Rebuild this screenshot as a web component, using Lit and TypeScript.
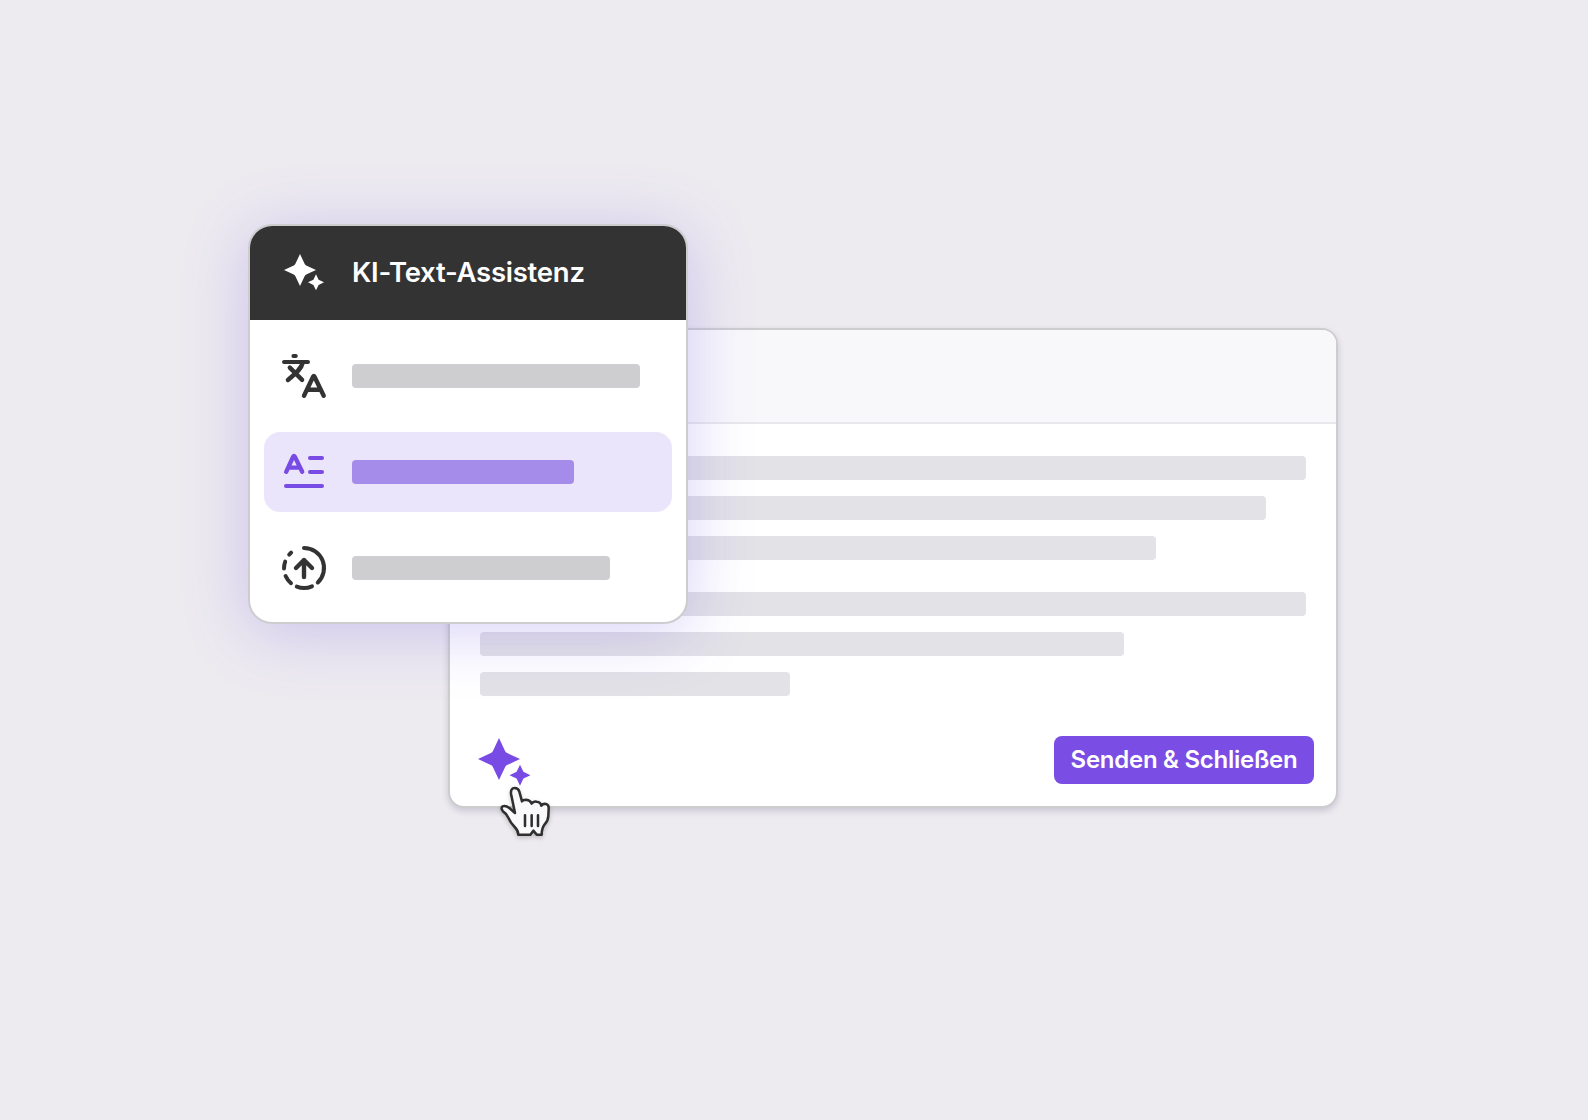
import { LitElement, html, css, svg } from 'lit';
import { customElement, property } from 'lit/decorators.js';
import { classMap } from 'lit/directives/class-map.js';
import { styleMap } from 'lit/directives/style-map.js';

const translateIcon = svg`
  <path d="M13.4 4h2.4M4 10h24"/>
  <path class="bold" d="M9.8 15.6l12.3 12.3M22.6 11C21.6 15.8 17.8 19.8 7.9 28"/>
  <path class="bold" d="M24 43.7l9.2-19.2q.6-1.1 1.2 0L43.7 43.7M27.6 37.8h12.6"/>
`;

const formatIcon = svg`
  <path class="bold" d="M6.2 23.8l7-15.2q.8-1.2 1.6 0l7.4 15.2M9.5 19.6h9.4"/>
  <path d="M30 10h12M30 24h12M6 38h36"/>
`;

const progressIcon = svg`
  <path d="M24 4a20 20 0 0 1 13.8 34.5M32 42.3a20 20 0 0 1-15.2.3M11 39.2A20 20 0 0 1 5.6 32M4 24.5A20 20 0 0 1 5.2 17.6M9.2 10.6l1.9-1.9"/>
  <path class="bold" d="M24 33V16M16 24l8-8 8 8"/>
`;

@customElement('skeleton-bar')
export class SkeletonBar extends LitElement {
  static styles = css`
    :host {
      display: block;
    }

    .bar {
      height: 24px;
      border-radius: 4px;
      background: #e3e2e7;
    }

    .menu {
      background: #cecdd0;
    }

    .active {
      background: #a58ceb;
    }
  `;

  @property({ type: Number }) width = 0;
  @property() tone = '';

  render() {
    const classes = { bar: true, menu: this.tone === 'menu', active: this.tone === 'active' };
    return html`<div class=${classMap(classes)} style=${styleMap({ width: `${this.width}px` })}></div>`;
  }
}

@customElement('sparkle-icon')
export class SparkleIcon extends LitElement {
  static styles = css`
    :host {
      display: block;
    }

    svg {
      display: block;
      width: 100%;
      height: 100%;
      fill: currentColor;
    }
  `;

  render() {
    return html`
      <svg viewBox="0 0 40 36.5">
        <path d="M16 0l4.6 9.8q.5 1.1 1.6 1.6L32 16l-9.8 4.6q-1.1.5-1.6 1.6L16 32l-4.6-9.8q-.5-1.1-1.6-1.6L0 16l9.8-4.6q1.1-.5 1.6-1.6z" />
        <path d="M32 20.3l2.6 5.4 5.4 2.6-5.4 2.6-2.6 5.4-2.6-5.4-5.4-2.6 5.4-2.6z" />
      </svg>
    `;
  }
}

@customElement('assist-menu')
export class AssistMenu extends LitElement {
  static styles = css`
    :host {
      display: block;
      box-sizing: border-box;
      width: 440px;
      height: 400px;
      border: 2px solid #cdcdd0;
      border-radius: 24px;
      overflow: hidden;
      background: #fff;
      box-shadow: 0 8px 64px rgba(110, 80, 225, 0.27);
    }

    header {
      display: flex;
      align-items: center;
      gap: 28px;
      height: 94px;
      box-sizing: border-box;
      padding: 0 0 2px 34px;
      background: #333;
      color: #fff;
      font-size: 27.5px;
      font-weight: 600;
      letter-spacing: -0.25px;
    }

    sparkle-icon {
      width: 40px;
      height: 36.5px;
    }

    .items {
      display: flex;
      flex-direction: column;
      gap: 16px;
      padding: 16px 14px 14px;
    }

    .item {
      display: flex;
      align-items: center;
      gap: 24px;
      height: 80px;
      box-sizing: border-box;
      padding-left: 16px;
      border-radius: 16px;
      color: #333;
    }

    .selected {
      background: #eae5fa;
      color: #784be4;
    }

    svg {
      display: block;
      width: 48px;
      height: 48px;
      overflow: visible;
      fill: none;
      stroke: currentColor;
      stroke-width: 4;
      stroke-linecap: round;
      stroke-linejoin: round;
    }

    .bold {
      stroke-width: 4.4;
    }
  `;

  items = [
    { icon: translateIcon, width: 288 },
    { icon: formatIcon, width: 222, selected: true },
    { icon: progressIcon, width: 258 },
  ];

  render() {
    return html`
      <header>
        <sparkle-icon></sparkle-icon>
        <span>KI-Text-Assistenz</span>
      </header>
      <div class="items">
        ${this.items.map(
          (item) => html`
            <div class=${classMap({ item: true, selected: !!item.selected })}>
              <svg viewBox="0 0 48 48">${item.icon}</svg>
              <skeleton-bar .width=${item.width} tone=${item.selected ? 'active' : 'menu'}></skeleton-bar>
            </div>
          `
        )}
      </div>
    `;
  }
}

@customElement('message-editor')
export class MessageEditor extends LitElement {
  static styles = css`
    :host {
      display: flex;
      flex-direction: column;
      box-sizing: border-box;
      width: 890px;
      height: 480px;
      border: 2px solid #cdcdd0;
      border-radius: 16px;
      background: #fff;
      box-shadow: 0 3px 6px rgba(60, 50, 90, 0.2);
    }

    .toolbar {
      flex: none;
      height: 92px;
      border-bottom: 2px solid #e9e8ed;
      border-radius: 14px 14px 0 0;
      background: #f8f8fb;
    }

    .body {
      display: flex;
      flex-direction: column;
      gap: 32px;
      padding: 32px 30px 40px;
    }

    .paragraph {
      display: flex;
      flex-direction: column;
      gap: 16px;
    }

    footer {
      display: flex;
      justify-content: space-between;
      align-items: flex-start;
      padding: 0 22px 0 27.5px;
    }

    .assist {
      position: relative;
      padding-top: 2px;
      color: #784be4;
    }

    .assist sparkle-icon {
      width: 52.5px;
      height: 48px;
    }

    .cursor {
      position: absolute;
      left: 20.5px;
      top: 47.5px;
      width: 55px;
      height: 55px;
      overflow: visible;
      filter: drop-shadow(0 2px 2px rgba(0, 0, 0, 0.2));
    }

    .hand {
      fill: #f9f9fb;
      stroke: #2f2f2f;
      stroke-width: 7.6;
      stroke-linejoin: round;
      stroke-linecap: round;
    }

    button {
      width: 260px;
      height: 48px;
      padding: 0 0 2px;
      border: 0;
      border-radius: 8px;
      background: #7a4de4;
      color: #fff;
      font: inherit;
      font-size: 24px;
      font-weight: 600;
      letter-spacing: -0.27px;
      white-space: nowrap;
    }
  `;

  paragraphs = [
    [826, 786, 676],
    [826, 644, 310],
  ];

  render() {
    return html`
      <div class="toolbar"></div>
      <div class="body">
        ${this.paragraphs.map(
          (lines) => html`
            <div class="paragraph">
              ${lines.map((width) => html`<skeleton-bar .width=${width}></skeleton-bar>`)}
            </div>
          `
        )}
      </div>
      <footer>
        <div class="assist">
          <sparkle-icon></sparkle-icon>
          <svg class="cursor" viewBox="100 175 165 165">
            <path
              class="hand"
              d="M139 204Q138 187 150 187Q161 187 164 198L172 227Q175 222 185 222Q197 223 201 234Q206 226 216 228Q228 229 230 240Q235 233 244 235Q253 237 252 249L251 270Q251 284 240 296Q231 308 231 327L216 327L206 315L197 327L161 327Q161 315 150 304Q138 292 131 276Q126 264 115 257Q107 247 114 242Q123 239 134 247L151 262Z"
            />
            <path class="hand" d="M181 269V301M201 269V301M220 269V301" />
          </svg>
        </div>
        <button>Senden &amp; Schließen</button>
      </footer>
    `;
  }
}

@customElement('app-root')
export class AppRoot extends LitElement {
  static styles = css`
    :host {
      display: block;
      box-sizing: border-box;
      height: 100vh;
      padding: 224px 250px 0 248px;
      overflow: hidden;
      background: #edebf0;
      font-family: Inter, 'Liberation Sans', sans-serif;
    }

    .stage {
      position: relative;
      display: flex;
      padding: 104px 0 0 200px;
    }

    assist-menu {
      position: absolute;
      top: 0;
      left: 0;
    }
  `;

  render() {
    return html`
      <div class="stage">
        <message-editor></message-editor>
        <assist-menu></assist-menu>
      </div>
    `;
  }
}
